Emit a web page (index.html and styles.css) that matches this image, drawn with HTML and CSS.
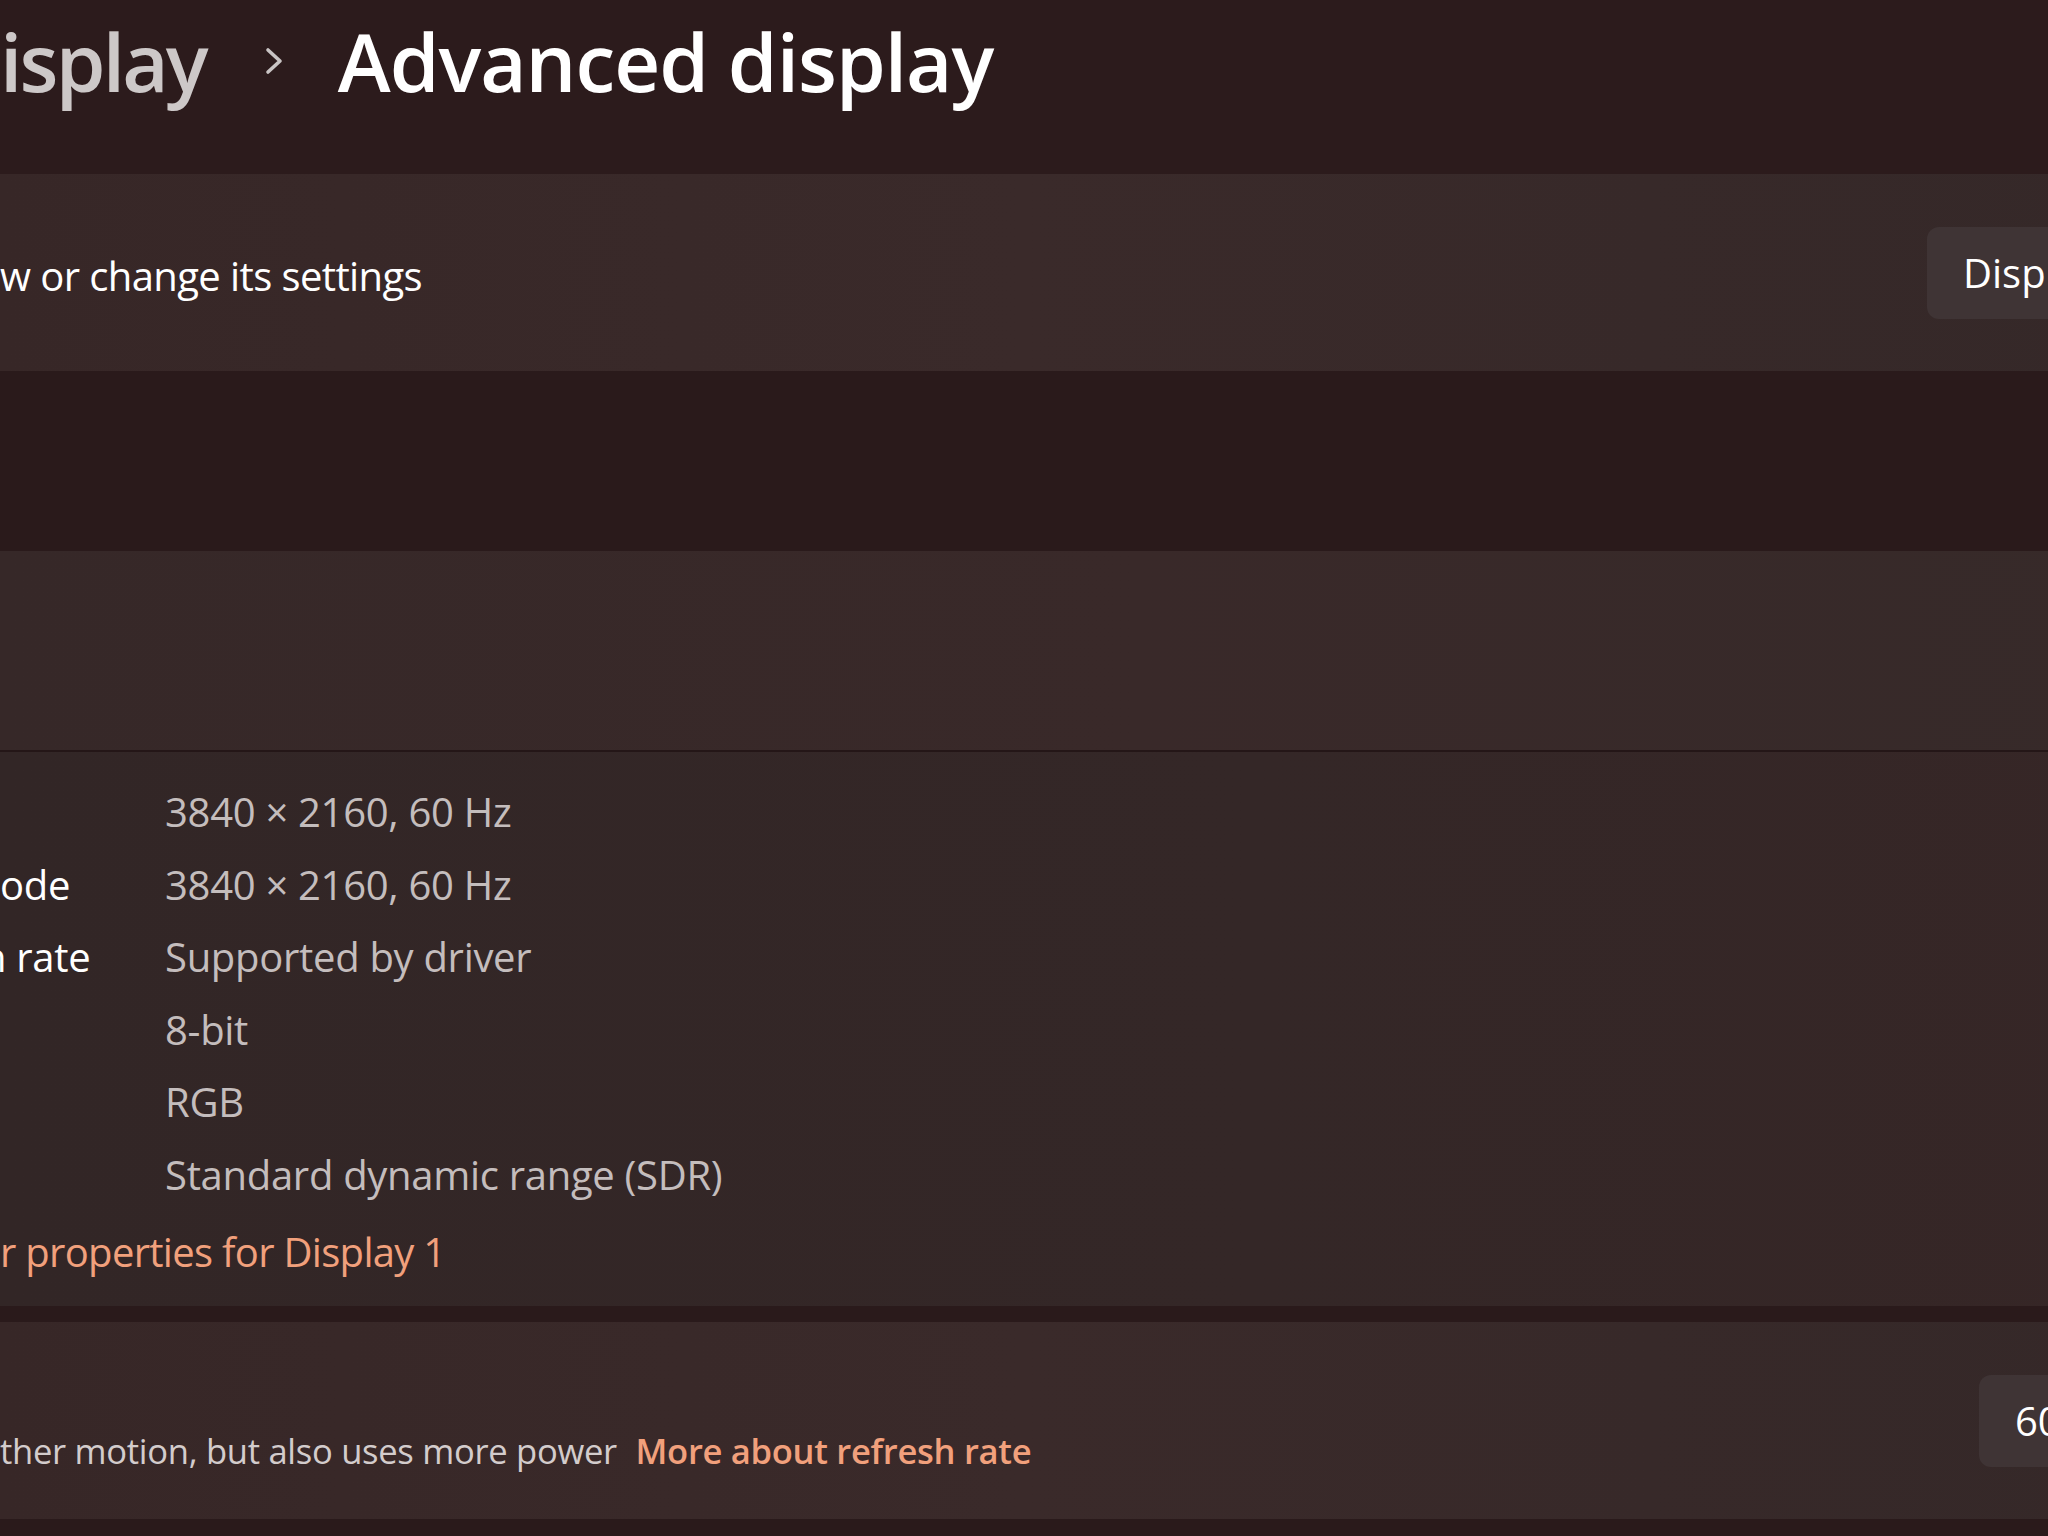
FILE: index.html
```html
<!DOCTYPE html>
<html lang="en">

<head>
    <meta charset="UTF-8">
    <title>Advanced display</title>
    <link rel="stylesheet" href="styles.css">
</head>

<body>

    <header class="page-head">
        <h1 class="crumbs">
            <span class="crumb-parent">isplay</span>
            <svg class="crumb-sep" viewBox="0 0 22 30" width="22" height="30">
                <path d="M5 4 L17 15 L5 26" fill="none" stroke="currentColor" stroke-width="3.6" stroke-linecap="round" stroke-linejoin="round" />
            </svg>
            <span class="crumb-current">Advanced display</span>
        </h1>
    </header>

    <main class="content">

        <section class="card card-select">
            <p class="card-text">w or change its settings</p>
            <button class="dropdown dropdown-wide">Display 1</button>
        </section>

        <section class="expander">
            <div class="expander-head"></div>
            <div class="expander-body">
                <dl class="info-grid">
                    <dt></dt>
                    <dd>3840 × 2160, 60 Hz</dd>
                    <dt>ode</dt>
                    <dd>3840 × 2160, 60 Hz</dd>
                    <dt class="cut">n rate</dt>
                    <dd>Supported by driver</dd>
                    <dt></dt>
                    <dd>8-bit</dd>
                    <dt></dt>
                    <dd>RGB</dd>
                    <dt></dt>
                    <dd>Standard dynamic range (SDR)</dd>
                </dl>
                <a class="link" href="#">r properties for Display 1</a>
            </div>
        </section>

        <section class="card card-refresh">
            <p class="card-desc">ther motion, but also uses more power <a class="link link-strong" href="#">More about refresh rate</a></p>
            <button class="dropdown dropdown-narrow">60 Hz</button>
        </section>

    </main>

</body>

</html>
```

FILE: styles.css
```css
* {
    margin: 0;
    padding: 0;
    box-sizing: border-box;
}

body {
    width: 2048px;
    height: 1536px;
    overflow: hidden;
    background: #2a1a1b;
    font-family: "Open Sans", "Noto Sans", sans-serif;
    color: #ffffff;
}

/* breadcrumb title */
.page-head {
    height: 174px;
    background: #2c1b1c;
}

.crumbs {
    display: flex;
    align-items: center;
    height: 122px;
    font-size: 80px;
    font-weight: 600;
    letter-spacing: -1px;
    line-height: 1;
}

.crumb-parent {
    color: #cdc8c8;
    letter-spacing: -2.8px;
}

.crumb-sep {
    margin-left: 57px;
    margin-right: 53px;
    color: #c9c4c4;
}

.crumb-current {
    color: #ffffff;
}

/* page body */
.content {
    width: 2275px;
}

.card {
    display: flex;
    align-items: center;
    justify-content: space-between;
    height: 197px;
    padding-right: 48px;
    background: linear-gradient(90deg, #372727 0%, #3a2a2a 45%, #342828 100%);
}

.card-text {
    padding-top: 5px;
    font-size: 40px;
    letter-spacing: -0.6px;
    color: #ffffff;
}

.dropdown {
    height: 92px;
    padding-left: 36px;
    border: 0;
    border-radius: 12px;
    background: #3f3435;
    color: #ffffff;
    font-family: inherit;
    font-size: 40px;
    text-align: left;
}

.dropdown-wide {
    width: 300px;
}

.dropdown-narrow {
    width: 248px;
}

.expander {
    margin-top: 180px;
}

.expander-head {
    height: 201px;
    background: linear-gradient(90deg, #362828 0%, #392929 50%, #362a29 100%);
    border-bottom: 2px solid #241617;
}

.expander-body {
    padding: 24px 0 24px;
    background: linear-gradient(90deg, #322626 0%, #342727 55%, #362626 100%);
}

.info-grid {
    display: grid;
    grid-template-columns: 165px 1fr;
    font-size: 40px;
    line-height: 72.5px;
    letter-spacing: -0.3px;
}

.info-grid dt {
    color: #ffffff;
}

.info-grid dt.cut {
    margin-left: -18px;
}

.info-grid dd {
    color: #c4bdbd;
}

.link {
    display: block;
    margin-top: 11px;
    line-height: 60px;
    font-size: 40px;
    letter-spacing: -0.7px;
    color: #f1a07c;
    text-decoration: none;
}

.card-refresh {
    margin-top: 16px;
}

.card-desc {
    align-self: flex-end;
    padding-bottom: 38px;
    line-height: 50px;
    font-size: 34.6px;
    letter-spacing: -0.3px;
    color: #d3cccc;
}

.card-desc .link-strong {
    display: inline;
    margin-left: 10px;
    font-size: 34.6px;
    font-weight: 600;
    letter-spacing: -0.3px;
}
```
